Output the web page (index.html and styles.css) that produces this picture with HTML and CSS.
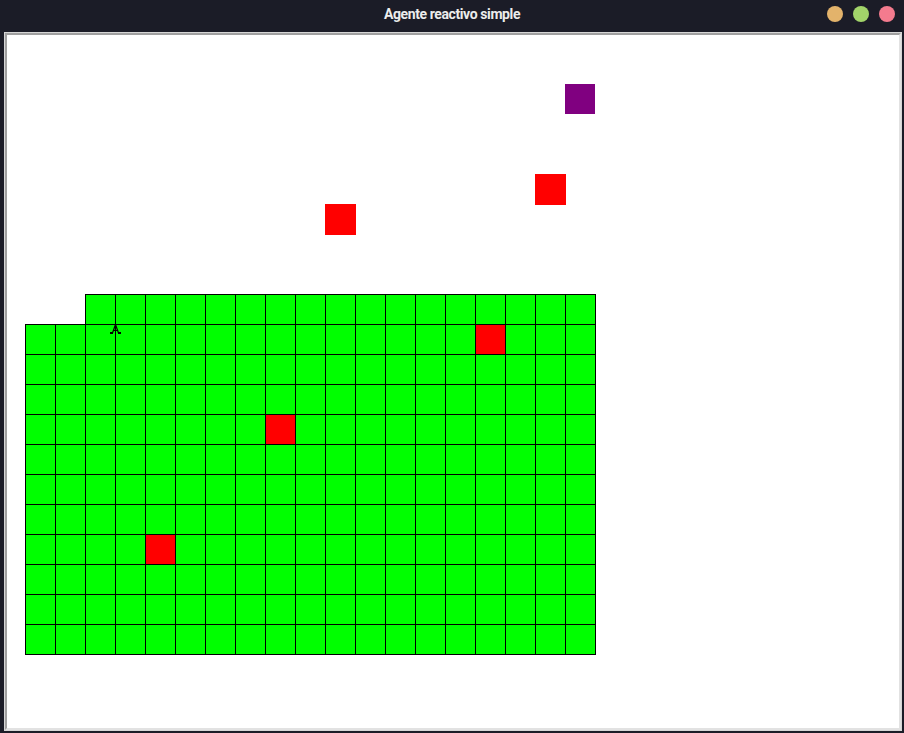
FILE: index.html
```html
<!DOCTYPE html>
<html lang="es">
<head>
<meta charset="utf-8">
<title>Agente reactivo simple</title>
<link rel="stylesheet" href="styles.css">
</head>
<body>
<div class="window">
  <header class="titlebar">
    <span class="title">Agente reactivo simple</span>
    <div class="controls">
      <span class="dot dot-min"></span>
      <span class="dot dot-max"></span>
      <span class="dot dot-close"></span>
    </div>
  </header>
  <main class="frame">
    <div class="canvas">
      <div class="item item-goal" style="left:558px;top:49px"></div>
      <div class="item item-obstacle" style="left:528px;top:139px"></div>
      <div class="item item-obstacle" style="left:318px;top:169px"></div>
      <div class="board" id="board"></div>
    </div>
  </main>
</div>
<script src="board.js"></script>
</body>
</html>
```
FILE: board.js
```js
(function () {
  var board = document.getElementById('board');
  var cols = 19, rows = 12;
  var red = { '1,15': 1, '4,8': 1, '8,4': 1 };
  for (var r = 0; r < rows; r++) {
    for (var c = 0; c < cols; c++) {
      var cell = document.createElement('div');
      if (r === 0 && c < 2) {
        cell.className = 'cell cell-empty';
      } else {
        cell.className = 'cell' + (red[r + ',' + c] ? ' cell-red' : '');
      }
      if (r === 1 && c === 3) {
        cell.classList.add('cell-agent');
        cell.innerHTML = '<svg class="agent" width="12" height="11" viewBox="0 0 12 11"><path d="M5.5 0.5 L2.5 9 M5.5 0.5 L8.5 9 M3.5 6.5 L7.5 6.5" stroke="#000" stroke-width="1.2" fill="none"/><rect x="0" y="8" width="3" height="2" fill="#000"/><rect x="8" y="8" width="3" height="2" fill="#000"/></svg>';
      }
      board.appendChild(cell);
    }
  }
})();
```
FILE: styles.css
```css
html, body {
  margin: 0;
  padding: 0;
  width: 904px;
  height: 733px;
  overflow: hidden;
  background: #1b1c27;
}

.window {
  display: flex;
  flex-direction: column;
  width: 904px;
  height: 733px;
}

.titlebar {
  position: relative;
  height: 32px;
  flex: 0 0 32px;
  display: flex;
  align-items: center;
  justify-content: center;
  background: #1b1c27;
}

.title {
  font-family: Roboto, "Noto Sans", sans-serif;
  font-weight: 700;
  font-size: 14px;
  letter-spacing: -0.4px;
  color: #ececec;
  margin-top: -4px;
}

.controls {
  position: absolute;
  right: 9px;
  top: 6px;
  display: flex;
  gap: 10px;
}

.dot {
  width: 16px;
  height: 16px;
  border-radius: 50%;
}
.dot-min { background: #e3b36b; }
.dot-max { background: #a2d46a; }
.dot-close { background: #f47b8e; }

.frame {
  flex: 0 0 auto;
  margin: 0 2px 0 4px;
  height: 699px;
  box-sizing: border-box;
  border: 1px solid #d6d6d6;
  display: flex;
}

.canvas {
  position: relative;
  flex: 1;
  background: #ffffff;
  border-style: solid;
  border-width: 2px;
  border-color: #a0a0a0 #e2e2e2 #e2e2e2 #a0a0a0;
}

.item {
  position: absolute;
}
.item-goal {
  width: 30px;
  height: 30px;
  background: #800080;
}
.item-obstacle {
  width: 31px;
  height: 31px;
  background: #ff0000;
}

.board {
  position: absolute;
  left: 18px;
  top: 259px;
  display: grid;
  grid-template-columns: repeat(19, 30px);
  grid-template-rows: repeat(12, 30px);
}

.cell {
  position: relative;
  width: 31px;
  height: 31px;
  box-sizing: border-box;
  border: 1px solid #000;
  background: #00ff00;
}
.cell-empty {
  border: none;
  background: transparent;
}
.cell-red {
  background: #ff0000;
}

.agent {
  position: absolute;
  left: -6px;
  top: -1px;
  display: block;
  overflow: visible;
}
```
